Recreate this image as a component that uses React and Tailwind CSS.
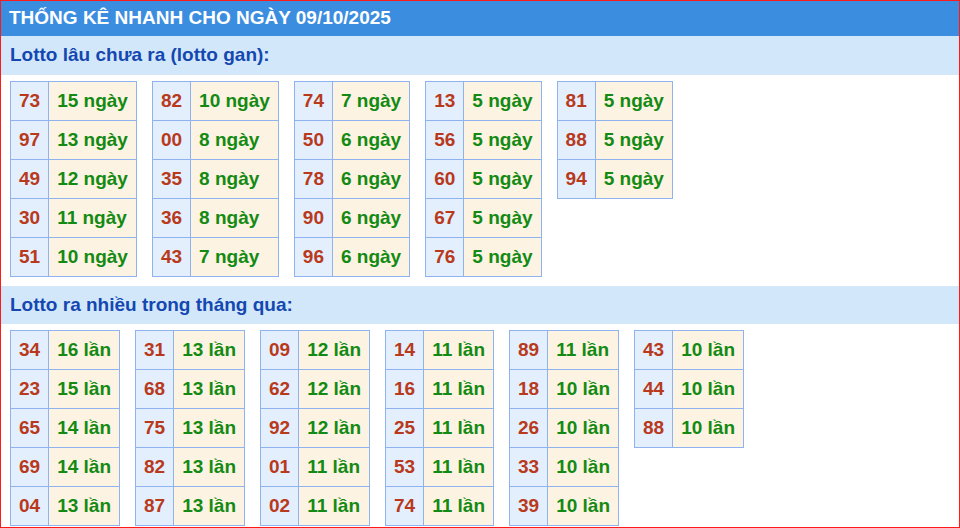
const gan = [
  [["73","15"],["97","13"],["49","12"],["30","11"],["51","10"]],
  [["82","10"],["00","8"],["35","8"],["36","8"],["43","7"]],
  [["74","7"],["50","6"],["78","6"],["90","6"],["96","6"]],
  [["13","5"],["56","5"],["60","5"],["67","5"],["76","5"]],
  [["81","5"],["88","5"],["94","5"]],
];
const nhieu = [
  [["34","16"],["23","15"],["65","14"],["69","14"],["04","13"]],
  [["31","13"],["68","13"],["75","13"],["82","13"],["87","13"]],
  [["09","12"],["62","12"],["92","12"],["01","11"],["02","11"]],
  [["14","11"],["16","11"],["25","11"],["53","11"],["74","11"]],
  [["89","11"],["18","10"],["26","10"],["33","10"],["39","10"]],
  [["43","10"],["44","10"],["88","10"]],
];

function T({ rows, unit }) {
  return (
    <table className="border-collapse self-start">
      <tbody>
        {rows.map(([n, c]) => (
          <tr key={n} className="h-[39px]">
            <td className="border border-[#8fb3ef] bg-[#e3effd] px-[8px] text-[#b8391b] text-center">{n}</td>
            <td className="border border-[#8fb3ef] bg-[#fdf3e2] px-[8px] text-[#138a13] whitespace-nowrap">{c} {unit}</td>
          </tr>
        ))}
      </tbody>
    </table>
  );
}

export default function App() {
  return (
    <div className="w-[960px] h-[528px] overflow-hidden border border-[#ff1a1a] bg-white [font-family:Liberation_Sans,Arial,sans-serif] font-bold text-[19px]">
      <div className="h-[35px] bg-[#3b8de0] text-white text-[19px] flex items-center px-[8px]">THỐNG KÊ NHANH CHO NGÀY 09/10/2025</div>
      <div className="h-[39px] bg-[#d3e7fb] text-[#1448b0] flex items-center px-[9px]">Lotto lâu chưa ra (lotto gan):</div>
      <div className="flex gap-[15px] pl-[9px] pt-[6px] h-[211px]">
        {gan.map((r, i) => <T key={i} rows={r} unit="ngày" />)}
      </div>
      <div className="h-[38px] bg-[#d3e7fb] text-[#1448b0] flex items-center px-[9px]">Lotto ra nhiều trong tháng qua:</div>
      <div className="flex gap-[15px] pl-[9px] pt-[6px]">
        {nhieu.map((r, i) => <T key={i} rows={r} unit="lần" />)}
      </div>
    </div>
  );
}
